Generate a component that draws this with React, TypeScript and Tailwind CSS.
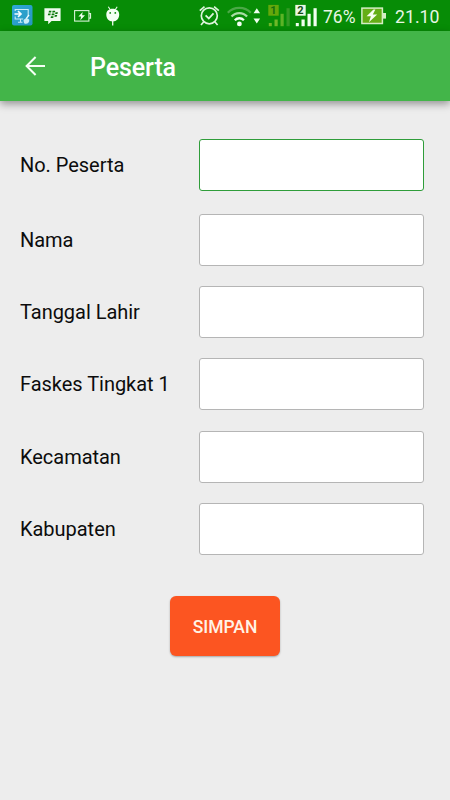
import React from "react";

function SyncAppIcon() {
  return (
    <svg className="ml-[12px] shrink-0" width="21" height="21" viewBox="0 0 21 21">
      <defs>
        <linearGradient id="sync" x1="0" y1="0" x2="1" y2="1">
          <stop offset="0" stopColor="#2fa9d6" />
          <stop offset="1" stopColor="#2796c0" />
        </linearGradient>
      </defs>
      <rect width="20.5" height="20.5" rx="2" fill="url(#sync)" />
      <path d="M3.2 6V4.500h13v6.500M3.2 11.500V14h8M6 17.200h4.500M8.500 14v3" fill="none" stroke="#c9edf7" strokeWidth="1.100" />
      <path d="M2.500 9h6M6 6.200 9 9l-3 2.800" fill="none" stroke="#f4fdff" strokeWidth="1.600" />
      <path d="m17 10-3 3.900" stroke="#f4fdff" strokeWidth="1.300" />
      <path d="M11.500 15.200c1.300-2 4.600-2.200 5.700-.4.500 2.200-1 4-3.400 4-1.300 0-2.100-.6-2.300-3.600z" fill="#c9edf7" />
    </svg>
  );
}

function MessengerIcon() {
  return (
    <svg className="ml-[11px] shrink-0" width="17" height="18" viewBox="0 0 17 18">
      <path d="M.4 1.300h16.200v12.700H7.600L4.200 17.200V14H.4z" fill="#effbef" />
      <g fill="#0b7a0b">
        <path d="M5 3.800h2.500l-.4 1.800H4.600zM8.600 3.800h2.300c.7.500.3 1.800-.8 1.800H8.200z" />
        <path d="M4.200 6.500h2.500l-.4 1.800H3.800zM7.900 6.500h2.300c.7.500.3 1.800-.8 1.800H7.500zM11.500 5.200h2.100c.7.500.3 1.800-.8 1.800h-1.700z" />
        <path d="M7 9.200h2.300c.7.500.3 1.800-.8 1.800H6.600zM10.800 8h2.100c.7.500.3 1.800-.8 1.800h-1.700z" />
      </g>
    </svg>
  );
}

function SmallBatteryIcon() {
  return (
    <svg className="ml-[13px] shrink-0" width="18" height="12" viewBox="0 0 18 12">
      <rect x=".6" y=".6" width="14.300" height="10.500" fill="none" stroke="#d8f2d8" strokeWidth="1.100" />
      <path d="M15 3.700h1.500v4.500H15" fill="none" stroke="#d8f2d8" strokeWidth="1.200" />
      <path d="M8.700 1.900 4.400 6.600h2.700l-.8 3.600 4.700-5H8.100z" fill="#f0fff0" />
    </svg>
  );
}

function DroidIcon() {
  return (
    <svg className="ml-[14px] shrink-0" width="14" height="20" viewBox="0 0 14 20">
      <path d="m2.300.8 2 3M11.200.8l-2 3" stroke="#effbef" strokeWidth="1.100" />
      <path d="M.3 8.500C.3 5 3 2.800 6.700 2.800s6.500 2.200 6.500 5.700c0 3.800-2.500 7-6.500 7s-6.400-3.200-6.400-7z" fill="#f3fff3" />
      <circle cx="4.200" cy="6.900" r=".9" fill="#0a860a" />
      <circle cx="9.300" cy="6.900" r=".9" fill="#0a860a" />
      <path d="M6.700 15v4.500" stroke="#effbef" strokeWidth="1.300" />
    </svg>
  );
}

function AlarmIcon() {
  return (
    <svg className="ml-[79px] shrink-0" width="21" height="22" viewBox="0 0 21 22" fill="none" stroke="#def4dc" strokeWidth="1.700">
      <circle cx="10.300" cy="10.800" r="8" />
      <path d="m.8 5.600 4.700-4M19.800 5.600l-4.700-4M4.800 16.800l-2.800 3.200M15.800 16.800l2.800 3.200" />
      <path d="m6.600 10.300 3.200 3.200 4.700-5.200" strokeWidth="1.800" />
    </svg>
  );
}

function WifiIcon() {
  return (
    <svg className="ml-[7px] shrink-0" width="34" height="22" viewBox="0 0 34 22" fill="none">
      <path d="M.8 7.800c6-6.700 17-6.700 23 0" stroke="#4ba847" strokeWidth="2.200" />
      <path d="M4.500 11.600c4.200-4.700 11.400-4.700 15.600 0" stroke="#a9dca6" strokeWidth="2.200" />
      <path d="M7.800 15.200c2.500-2.600 6.600-2.600 9.100 0" stroke="#effff0" strokeWidth="2.300" />
      <circle cx="12.400" cy="18.900" r="2.400" fill="#f4fff4" />
      <path d="m26.500 8.200 3.300-5 3.300 5zM26.500 13.500l3.300 5 3.300-5z" fill="#effff0" />
    </svg>
  );
}

function Sim({ slot, active }: { slot: string; active: boolean }) {
  const tone = active ? "#f1fff1" : "#6fb829";
  return (
    <svg
      className={active ? "ml-[5px] shrink-0" : "ml-[7px] shrink-0"}
      width="22"
      height="23"
      viewBox="0 0 22 23"
    >
      <rect x=".3" y=".9" width="10.400" height="10.800" fill={active ? "#e9f8e5" : "#64a80b"} />
      <text x="5.500" y="10.300" textAnchor="middle" fontFamily="Roboto, sans-serif" fontSize="11" fontWeight="700" fill={active ? "#164d16" : "#12700e"}>
        {slot}
      </text>
      <rect x=".8" y="19" width="3" height="3.200" fill={tone} />
      <rect x="6.500" y="15.500" width="3.200" height="6.700" fill={tone} />
      <rect x="12.500" y="9.800" width="3.200" height="12.400" fill={active ? tone : "#5db327"} />
      <rect x="18.500" y="4.200" width="3.200" height="18" fill={active ? tone : "#349b25"} />
    </svg>
  );
}

function ChargingIcon() {
  return (
    <svg className="shrink-0" width="26" height="18" viewBox="0 0 26 18">
      <rect x=".9" y="1.100" width="20.500" height="15.400" fill="#65ae16" stroke="#d4edc5" strokeWidth="1.500" />
      <rect x="22" y="6" width="3" height="5.600" fill="#d4edc5" />
      <path d="M12.500 2.400 5.600 9.200h4.300l-2 6 8.300-7.700h-4.400l2.600-5.100z" fill="#f7fff0" />
    </svg>
  );
}

function StatusBar() {
  return (
    <div className="flex h-[31px] shrink-0 items-center bg-[#078c06] text-[#e6f6e4]">
      <SyncAppIcon />
      <MessengerIcon />
      <SmallBatteryIcon />
      <DroidIcon />
      <AlarmIcon />
      <WifiIcon />
      <Sim slot="1" active={false} />
      <Sim slot="2" active />
      <span className="ml-[6px] w-[38px] whitespace-nowrap pt-[2px] text-[17.500px] leading-5">76%</span>
      <ChargingIcon />
      <span className="ml-[8px] whitespace-nowrap pt-[2px] text-[17.700px] leading-5">21.10</span>
    </div>
  );
}

const fields = [
  { label: "No. Peserta", row: "mt-[38px]", box: "border-[#2f9d3a]" },
  { label: "Nama", row: "mt-[23px]", box: "border-[#b5b5b5]" },
  { label: "Tanggal Lahir", row: "mt-5", box: "border-[#b5b5b5]" },
  { label: "Faskes Tingkat 1", row: "mt-5", box: "border-[#b5b5b5]" },
  { label: "Kecamatan", row: "mt-[21px]", box: "border-[#b5b5b5]" },
  { label: "Kabupaten", row: "mt-5", box: "border-[#b5b5b5]" },
];

export default function App() {
  return (
    <div className="flex h-[800px] w-[450px] flex-col overflow-hidden bg-[#ededed] font-['Roboto',sans-serif]">
      <StatusBar />
      <header className="flex h-[70px] shrink-0 items-center bg-[#43b549] text-white shadow-[0_3px_8px_rgba(0,0,0,0.38)]">
        <svg className="ml-[25px]" width="21" height="20" viewBox="0 0 21 20" fill="none" stroke="#f5fff5" strokeWidth="2">
          <path d="M20 10H1.700M10.600 1 1.600 10l9 9" />
        </svg>
        <h1 className="ml-[44px] pt-[3px] text-[25px] font-medium leading-8 tracking-[-0.1px]">Peserta</h1>
      </header>
      <form className="flex flex-col" onSubmit={(e) => e.preventDefault()}>
        {fields.map((f) => (
          <label key={f.label} className={`flex h-[52px] items-center pl-5 ${f.row}`}>
            <span className="w-[179px] whitespace-nowrap text-[20px] leading-6 tracking-[-0.03px] text-[#0c0c0c]">{f.label}</span>
            <input className={`h-[52px] w-[225px] rounded-[3px] border bg-white px-3 outline-none ${f.box}`} />
          </label>
        ))}
        <button className="mt-[41px] h-[60px] w-[110px] self-center rounded-[6px] bg-[#fc5521] pt-[2px] text-[17.500px] font-medium text-[#fff3e6] shadow-[0_1px_2px_rgba(0,0,0,0.3)]">
          SIMPAN
        </button>
      </form>
    </div>
  );
}
